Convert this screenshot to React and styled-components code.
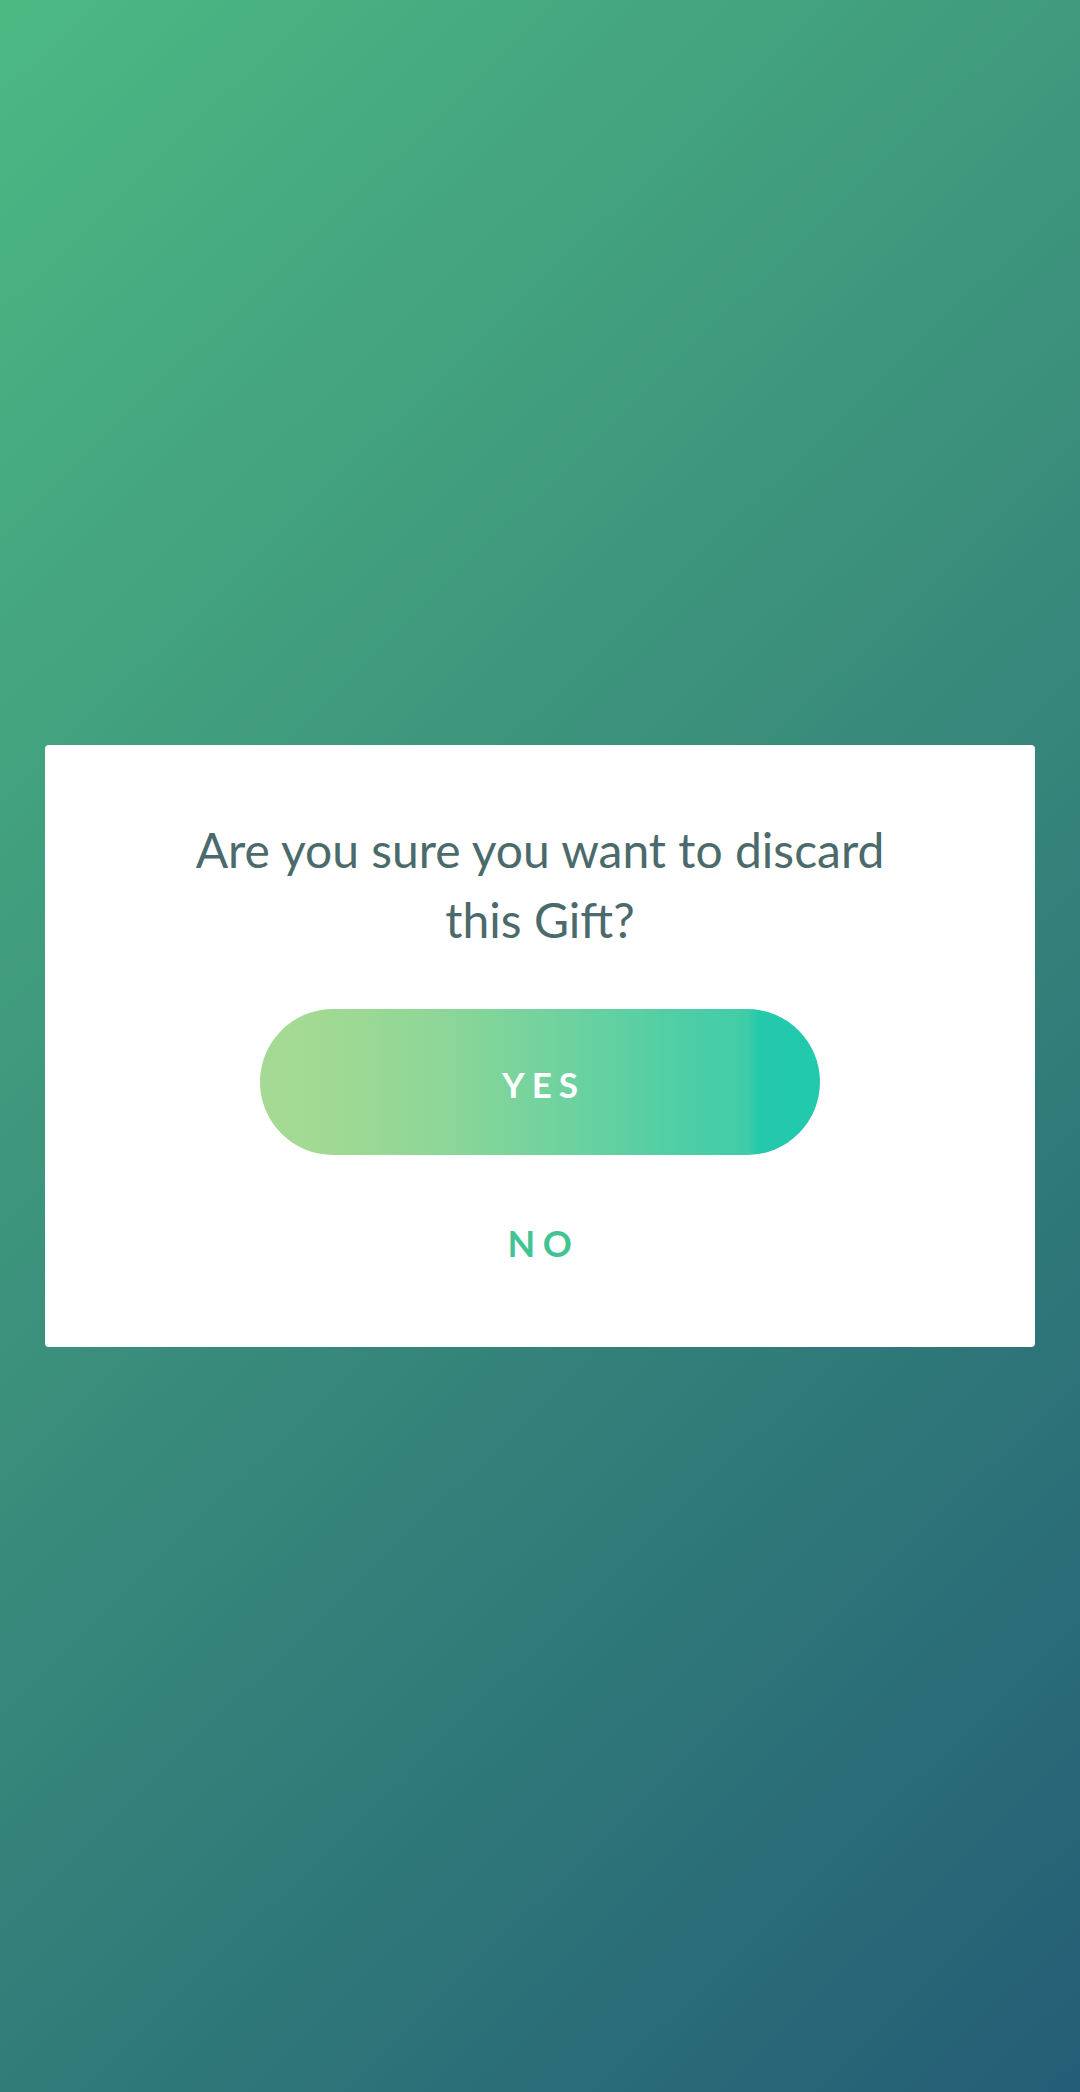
import React from 'react';
import styled, { createGlobalStyle } from 'styled-components';

const GlobalStyle = createGlobalStyle`
  html, body {
    margin: 0;
    padding: 0;
  }
  body {
    font-family: Lato, "Open Sans", sans-serif;
  }
`;

const Screen = styled.div`
  width: 1080px;
  min-height: 2092px;
  display: flex;
  align-items: center;
  justify-content: center;
  background: linear-gradient(136deg, #4cb983 0%, #3d947c 40%, #307b79 68%, #245d76 100%);
`;

const Dialog = styled.div`
  width: 990px;
  box-sizing: border-box;
  background-color: #fff;
  border-radius: 4px;
  padding: 70px 140px 44px;
  display: flex;
  flex-direction: column;
  align-items: center;
`;

const Question = styled.p`
  margin: 0;
  font-size: 48px;
  font-weight: 400;
  line-height: 70px;
  color: #4b6a6c;
  text-align: center;
`;

const YesButton = styled.button`
  margin-top: 54px;
  width: 560px;
  height: 146px;
  border: none;
  border-radius: 73px;
  background: linear-gradient(
    90deg,
    #a5da94 0%,
    #a1d993 12%,
    #8ed697 32%,
    #6dd29f 55%,
    #4fcea5 75%,
    #40cca8 87%,
    #24c9ac 89%,
    #22c9ad 100%
  );
  color: #fff;
  font-family: Lato, sans-serif;
  font-size: 35px;
  font-weight: 700;
  letter-spacing: 7px;
  padding: 4px 0 0 7px;
  cursor: pointer;
`;

const NoButton = styled.button`
  margin-top: 28px;
  height: 120px;
  padding: 0 40px 0 47px;
  border: none;
  background: none;
  color: #43c394;
  font-family: Lato, sans-serif;
  font-size: 36px;
  font-weight: 700;
  letter-spacing: 7.5px;
  cursor: pointer;
`;

const App = () => {
  return (
    <>
      <GlobalStyle />
      <Screen>
        <Dialog>
          <Question>Are you sure you want to discard this Gift?</Question>
          <YesButton>YES</YesButton>
          <NoButton>NO</NoButton>
        </Dialog>
      </Screen>
    </>
  );
};

export default App;
